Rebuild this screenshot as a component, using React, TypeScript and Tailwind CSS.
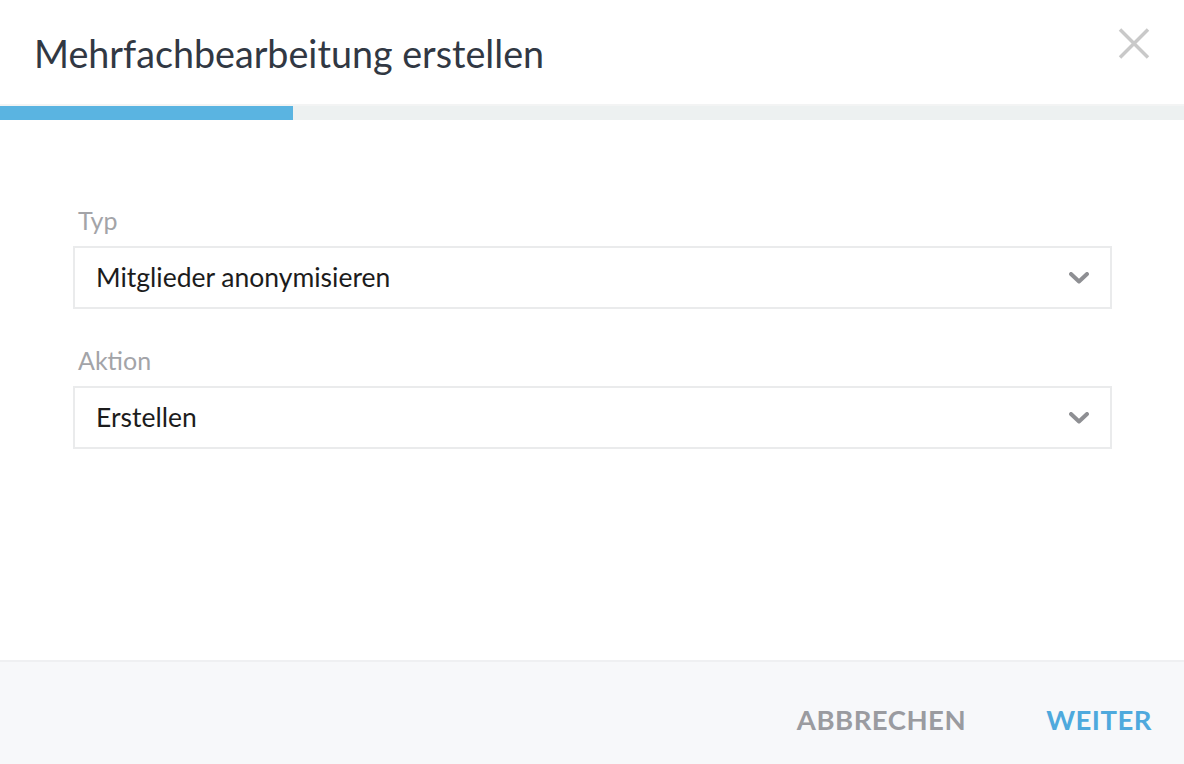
const font = { fontFamily: "Lato, 'Noto Sans', sans-serif" };

const Chevron = () => (
  <svg width="20" height="12" viewBox="0 0 20 12" className="shrink-0">
    <path d="M2 2 L10 9.5 L18 2" fill="none" stroke="#8e8f93" strokeWidth="4" strokeLinecap="round" strokeLinejoin="round" />
  </svg>
);

const SelectField = ({ label, value }: { label: string; value: string }) => (
  <div className="flex flex-col">
    <label className="pl-[5px] text-[25px] leading-[30px] text-[#a3a4a8]">{label}</label>
    <div className="mt-[11px] flex h-[63px] items-center justify-between border-2 border-[#eaebec] bg-white pl-[21px] pr-[21px]">
      <span className="text-[26.5px] text-[#1c1c1c]">{value}</span>
      <Chevron />
    </div>
  </div>
);

export default function App() {
  return (
    <div className="flex h-[764px] w-full flex-col bg-white" style={font}>
      {/* ── Header ── */}
      <div className="flex h-[104px] justify-between pl-[34px] pr-[34px]">
        <h1 className="mt-[31px] text-[37.7px] leading-[46px] font-normal text-[#313843]">
          Mehrfachbearbeitung erstellen
        </h1>
        <svg width="32" height="31" viewBox="0 0 32 31" className="mt-[28px]">
          <path d="M2 1.5 L30 29.5 M30 1.5 L2 29.5" stroke="#c9c9c9" strokeWidth="3.5" />
        </svg>
      </div>

      {/* ── Progress ── */}
      <div className="h-[16px] border-t-2 border-[#f3f4f4] bg-[#edf1f1]">
        <div className="h-full w-[293px] bg-[#5ab4e1]" />
      </div>

      {/* ── Fields ── */}
      <div className="flex flex-1 flex-col gap-[36px] pl-[73px] pr-[72px] pt-[85px]">
        <SelectField label="Typ" value="Mitglieder anonymisieren" />
        <SelectField label="Aktion" value="Erstellen" />
      </div>

      {/* ── Footer ── */}
      <div className="flex h-[104px] items-center justify-end gap-[80px] border-t-2 border-[#eff0f2] bg-[#f7f8fa] pr-[32px] pt-[14px]">
        <button className="text-[27.5px] font-bold tracking-[0.5px] text-[#9a9ba0]">ABBRECHEN</button>
        <button className="text-[27.5px] font-bold tracking-[0.5px] text-[#4ea9dd]">WEITER</button>
      </div>
    </div>
  );
}
